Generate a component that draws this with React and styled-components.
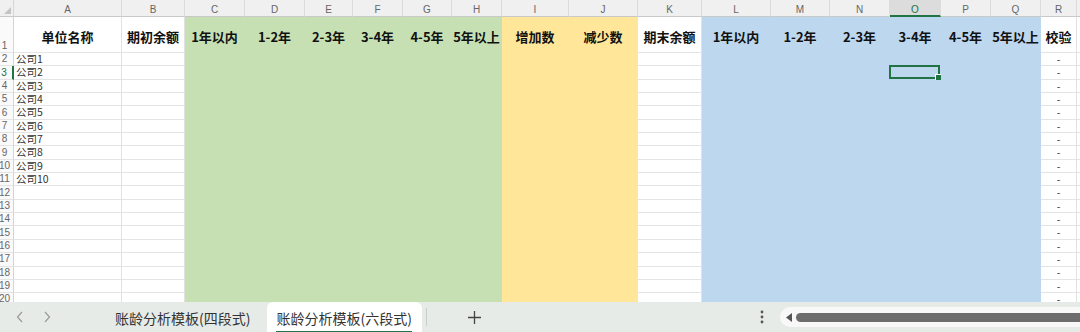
import styled, { createGlobalStyle } from 'styled-components';

const GlobalStyle = createGlobalStyle`
  html, body {
    margin: 0;
    padding: 0;
    background: #ffffff;
    overflow: hidden;
  }
  body {
    font-family: "Noto Sans CJK SC", "Noto Sans", "Liberation Sans", sans-serif;
  }
`;

const FILLS = {
  green: '#c6e0b4',
  yellow: '#ffe699',
  blue: '#bdd7ee',
};

const columns = [
  { key: 'A', w: 108, title: '单位名称' },
  { key: 'B', w: 63, title: '期初余额' },
  { key: 'C', w: 60, title: '1年以内', fill: 'green' },
  { key: 'D', w: 60, title: '1-2年', fill: 'green' },
  { key: 'E', w: 48, title: '2-3年', fill: 'green' },
  { key: 'F', w: 50, title: '3-4年', fill: 'green' },
  { key: 'G', w: 49, title: '4-5年', fill: 'green' },
  { key: 'H', w: 50, title: '5年以上', fill: 'green' },
  { key: 'I', w: 67, title: '增加数', fill: 'yellow' },
  { key: 'J', w: 69, title: '减少数', fill: 'yellow' },
  { key: 'K', w: 64, title: '期末余额' },
  { key: 'L', w: 69, title: '1年以内', fill: 'blue' },
  { key: 'M', w: 59, title: '1-2年', fill: 'blue' },
  { key: 'N', w: 60, title: '2-3年', fill: 'blue' },
  { key: 'O', w: 51, title: '3-4年', fill: 'blue' },
  { key: 'P', w: 50, title: '4-5年', fill: 'blue' },
  { key: 'Q', w: 50, title: '5年以上', fill: 'blue' },
  { key: 'R', w: 36, title: '校验' },
  // column S only peeks in at the right edge, its letter is off-screen
  { key: 'S', w: 40, title: '', hideLabel: true },
];

const ROW_COUNT = 20;
const selected = { col: 'O', row: 3 };

const cellValue = (col, row) => {
  if (col === 'A' && row >= 2 && row <= 11) return `公司${row - 1}`;
  if (col === 'R' && row >= 2) return '-';
  return '';
};

const Page = styled.div`
  width: 1080px;
  height: 332px;
  display: flex;
  flex-direction: column;
  overflow: hidden;
`;

const Sheet = styled.div`
  flex: 1;
  overflow: hidden;
  display: grid;
  grid-template-columns: 14px ${columns.map((c) => `${c.w}px`).join(' ')};
  grid-template-rows: 17px 36px repeat(${ROW_COUNT - 1}, 13.35px);
`;

const Corner = styled.div`
  position: relative;
  background: #f0f0f0;
  border-bottom: 1px solid #c9c9c9;
  border-right: 1px solid #d6d6d6;
  box-sizing: border-box;
  svg {
    position: absolute;
    right: 2px;
    bottom: 2px;
  }
`;

const ColHeader = styled.div`
  box-sizing: border-box;
  background: ${(p) => (p.$active ? '#dcdcdc' : '#f0f0f0')};
  border-bottom: ${(p) => (p.$active ? '2px solid #217346' : '1px solid #c9c9c9')};
  border-right: 1px solid #dcdcdc;
  display: flex;
  align-items: center;
  justify-content: center;
  padding-top: 4px;
  font-family: "Liberation Sans", "Noto Sans", sans-serif;
  font-size: 10px;
  color: ${(p) => (p.$active ? '#217346' : '#666666')};
  line-height: 1;
  white-space: nowrap;
`;

const RowHeader = styled.div`
  box-sizing: border-box;
  background: #fafafa;
  border-right: ${(p) => (p.$active ? '2px solid #217346' : '1px solid #d4d4d4')};
  border-bottom: 1px solid #e4e4e4;
  display: flex;
  align-items: ${(p) => (p.$tall ? 'flex-end' : 'center')};
  padding-right: 4px;
  padding-bottom: ${(p) => (p.$tall ? '1px' : '0')};
  justify-content: center;
  font-family: "Liberation Sans", "Noto Sans", sans-serif;
  font-size: 10px;
  line-height: 1;
  color: ${(p) => (p.$active ? '#217346' : '#666666')};
  white-space: nowrap;
`;

const Cell = styled.div`
  position: relative;
  box-sizing: border-box;
  background: ${(p) => (p.$fill ? FILLS[p.$fill] : '#ffffff')};
  border-right: 1px solid ${(p) => (p.$fill ? FILLS[p.$fill] : '#e1e1e1')};
  border-bottom: 1px solid ${(p) => (p.$fill ? FILLS[p.$fill] : '#e4e4e4')};
  display: flex;
  align-items: center;
  justify-content: ${(p) => p.$align};
  padding: ${(p) => (p.$head ? '4px 0 0' : '0 2px')};
  font-size: ${(p) => (p.$head ? '13px' : '10.5px')};
  font-weight: ${(p) => (p.$head ? 700 : 400)};
  color: ${(p) => (p.$head ? '#111111' : '#333333')};
  line-height: 1;
  white-space: nowrap;
`;

const Selection = styled.div`
  position: absolute;
  inset: -1px 0 0 -1px;
  border: 2px solid #217346;
  box-sizing: border-box;
  &::after {
    content: '';
    position: absolute;
    right: -4px;
    bottom: -4px;
    width: 5px;
    height: 5px;
    background: #217346;
    border: 1px solid #ffffff;
  }
`;

const TabBar = styled.div`
  height: 30px;
  flex: none;
  background: #e7ebe8;
  display: flex;
  align-items: stretch;
`;

const NavArrows = styled.div`
  width: 86px;
  display: flex;
  align-items: center;
  gap: 19px;
  padding-left: 16px;
  box-sizing: border-box;
  color: #9a9a9a;
`;

const Tab = styled.div`
  display: flex;
  align-items: center;
  justify-content: center;
  padding: 0 ${(p) => (p.$active ? '10px' : '17px')} 0 ${(p) => (p.$active ? '9px' : '29px')};
  background: ${(p) => (p.$active ? '#ffffff' : 'transparent')};
  border-radius: ${(p) => (p.$active ? '6px 6px 0 0' : '0')};
  font-size: 14px;
  color: #333333;
  white-space: nowrap;
`;

const TabLabel = styled.span`
  padding: 2px 0 3px;
  border-bottom: 2px solid ${(p) => (p.$active ? '#217346' : 'transparent')};
  margin-top: 4px;
`;

const Divider = styled.div`
  width: 1px;
  height: 18px;
  align-self: center;
  background: #c9cccb;
  margin-left: 4px;
`;

const AddButton = styled.div`
  width: 96px;
  display: flex;
  align-items: center;
  justify-content: center;
  color: #444444;
`;

const Spacer = styled.div`
  flex: 1;
`;

const MoreButton = styled.div`
  width: 16px;
  display: flex;
  align-items: center;
  justify-content: center;
  margin-right: 10px;
  color: #555555;
`;

const ScrollTrack = styled.div`
  align-self: center;
  width: 300px;
  height: 20px;
  background: #f7f8f7;
  border-radius: 10px 0 0 10px;
  display: flex;
  align-items: center;
  padding-left: 6px;
  gap: 3px;
  box-sizing: border-box;
`;

const ScrollThumb = styled.div`
  flex: 1;
  height: 9px;
  background: #6d6d6d;
  border-radius: 5px 0 0 5px;
`;

const Chevron = ({ dir }) => (
  <svg width="8" height="12" viewBox="0 0 8 12" fill="none" stroke="currentColor" strokeWidth="1.2">
    {dir === 'left' ? <path d="M6 1 L1.5 6 L6 11" /> : <path d="M2 1 L6.5 6 L2 11" />}
  </svg>
);

export default function App() {
  const cells = [];
  cells.push(
    <Corner key="corner">
      <svg width="7" height="7" viewBox="0 0 7 7">
        <path d="M7 0 L7 7 L0 7 Z" fill="#c4c4c4" />
      </svg>
    </Corner>
  );
  columns.forEach((c) => {
    cells.push(
      <ColHeader key={`h-${c.key}`} $active={c.key === selected.col}>
        {c.hideLabel ? '' : c.key}
      </ColHeader>
    );
  });
  for (let row = 1; row <= ROW_COUNT; row += 1) {
    cells.push(
      <RowHeader key={`r-${row}`} $active={row === selected.row} $tall={row === 1}>
        {row}
      </RowHeader>
    );
    columns.forEach((c) => {
      const head = row === 1;
      const text = head ? c.title : cellValue(c.key, row);
      const align = head || c.key === 'R' ? 'center' : 'flex-start';
      cells.push(
        <Cell key={`${c.key}${row}`} $fill={c.fill} $head={head} $align={align}>
          {text}
          {c.key === selected.col && row === selected.row && <Selection />}
        </Cell>
      );
    });
  }

  return (
    <>
      <GlobalStyle />
      <Page>
        <Sheet>{cells}</Sheet>
        <TabBar>
          <NavArrows>
            <Chevron dir="left" />
            <Chevron dir="right" />
          </NavArrows>
          <Tab>
            <TabLabel>账龄分析模板(四段式)</TabLabel>
          </Tab>
          <Tab $active>
            <TabLabel $active>账龄分析模板(六段式)</TabLabel>
          </Tab>
          <Divider />
          <AddButton>
            <svg width="13" height="13" viewBox="0 0 13 13" stroke="currentColor" strokeWidth="1.3">
              <path d="M6.5 0 V13 M0 6.5 H13" />
            </svg>
          </AddButton>
          <Spacer />
          <MoreButton>
            <svg width="4" height="14" viewBox="0 0 4 14" fill="currentColor">
              <circle cx="2" cy="2" r="1.4" />
              <circle cx="2" cy="7" r="1.4" />
              <circle cx="2" cy="12" r="1.4" />
            </svg>
          </MoreButton>
          <ScrollTrack>
            <svg width="7" height="9" viewBox="0 0 7 9">
              <path d="M0 4.5 L6 0 L6 9 Z" fill="#555555" />
            </svg>
            <ScrollThumb />
          </ScrollTrack>
        </TabBar>
      </Page>
    </>
  );
}
